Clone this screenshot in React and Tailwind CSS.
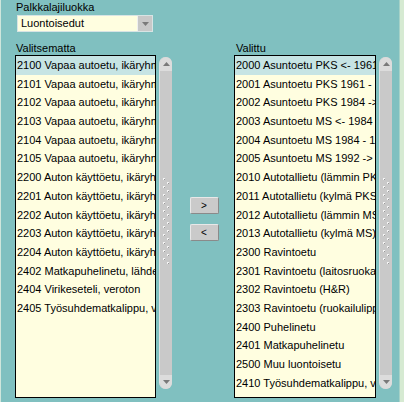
import React from 'react';

const leftItems = [
  '2100 Vapaa autoetu, ikäryhmä A',
  '2101 Vapaa autoetu, ikäryhmä B',
  '2102 Vapaa autoetu, ikäryhmä C',
  '2103 Vapaa autoetu, ikäryhmä A',
  '2104 Vapaa autoetu, ikäryhmä B',
  '2105 Vapaa autoetu, ikäryhmä C',
  '2200 Auton käyttöetu, ikäryhmä A',
  '2201 Auton käyttöetu, ikäryhmä B',
  '2202 Auton käyttöetu, ikäryhmä C',
  '2203 Auton käyttöetu, ikäryhmä A',
  '2204 Auton käyttöetu, ikäryhmä B',
  '2402 Matkapuhelinetu, lähdevero',
  '2404 Virikeseteli, veroton',
  '2405 Työsuhdematkalippu, veroton',
];

const rightItems = [
  '2000 Asuntoetu PKS <- 1961',
  '2001 Asuntoetu PKS 1961 - 1983',
  '2002 Asuntoetu PKS 1984 ->',
  '2003 Asuntoetu MS <- 1984',
  '2004 Asuntoetu MS 1984 - 1991',
  '2005 Asuntoetu MS 1992 ->',
  '2010 Autotallietu (lämmin PKS)',
  '2011 Autotallietu (kylmä PKS)',
  '2012 Autotallietu (lämmin MS)',
  '2013 Autotallietu (kylmä MS)',
  '2300 Ravintoetu',
  '2301 Ravintoetu (laitosruokailu)',
  '2302 Ravintoetu (H&R)',
  '2303 Ravintoetu (ruokailulippu)',
  '2400 Puhelinetu',
  '2401 Matkapuhelinetu',
  '2500 Muu luontoisetu',
  '2410 Työsuhdematkalippu, verollinen',
];

// grip dots in the middle of the scrollbar
const Grip = () => (
  <svg width="9" height="90" viewBox="0 0 9 90">
    {Array.from({ length: 22 }).map((_, i) => (
      <g key={i}>
        <rect x={i % 2 === 0 ? 1 : 5} y={i * 4} width="2" height="2" fill="#f4f4f4" />
        <rect x={i % 2 === 0 ? 2 : 6} y={i * 4 + 1} width="1" height="1" fill="#9a9a9a" />
      </g>
    ))}
  </svg>
);

const ScrollBar = () => (
  <div className="mt-[2px] flex h-[332px] w-[13px] flex-col items-center rounded-t-[7px] rounded-b-[7px] bg-[#c9c9c9] border-l border-[#e2e2e2]">
    <div className="flex h-[14px] w-full items-center justify-center rounded-t-[7px] bg-[#dcdcdc]">
      <svg width="7" height="4" viewBox="0 0 7 4">
        <path d="M0 4 L3.5 0 L7 4 Z" fill="#7a7a7a" />
      </svg>
    </div>
    <div className="flex flex-1 items-center justify-center">
      <Grip />
    </div>
    <div className="flex h-[14px] w-full items-center justify-center rounded-b-[7px] bg-[#dcdcdc]">
      <svg width="7" height="4" viewBox="0 0 7 4">
        <path d="M0 0 L3.5 4 L7 0 Z" fill="#7a7a7a" />
      </svg>
    </div>
  </div>
);

const ListBox = ({ items, width }) => (
  <div className={`h-[343px] ${width} overflow-hidden border border-black bg-[#fffee0]`}>
    {items.map((item, index) => (
      <div
        key={index}
        className={`h-[18.7px] whitespace-nowrap pl-px leading-[18.7px] ${index === 0 ? 'bg-[#c6e4e4]' : ''}`}
      >
        {item}
      </div>
    ))}
  </div>
);

const MoveButton = ({ label }) => (
  <button className="flex h-[17px] w-[29px] items-center justify-center rounded-[2px] border border-t-[#e8e8e8] border-l-[#e8e8e8] border-r-[#8a8a8a] border-b-[#8a8a8a] bg-[#cacaca] text-[10px] leading-none text-black">
    {label}
  </button>
);

export default function App() {
  return (
    <div className="flex h-[402px] w-[404px] overflow-hidden bg-[#80c0c0] font-['Liberation_Sans',Arial,sans-serif] text-[11px] text-black">
      <div className="w-px bg-[#cfe6dc]" />

      <div className="flex-1 pl-[14px] pt-[1px]">
        {/* Luokka valinta */}
        <div className="ml-px h-[13px] leading-[13px]">Palkkalajiluokka</div>
        <div className="ml-[2px] mt-px flex h-[17px] w-[136px] border border-[#d8e4e4] bg-[#fffee0]">
          <div className="flex-1 pl-[3px] leading-[15px]">Luontoisedut</div>
          <div className="flex w-[15px] items-center justify-center border-l border-[#f0f0f0] bg-[#c8c8c8]">
            <svg width="7" height="4" viewBox="0 0 7 4">
              <path d="M0 0 L3.5 4 L7 0 Z" fill="#7a7a7a" />
            </svg>
          </div>
        </div>

        <div className="mt-[9px] flex">
          {/* Valitsematta */}
          <div className="flex flex-col">
            <div className="ml-px h-[14px] leading-[14px]">Valitsematta</div>
            <div className="flex gap-[3px]">
              <ListBox items={leftItems} width="w-[141px]" />
              <ScrollBar />
            </div>
          </div>

          {/* Siirtonapit */}
          <div className="flex w-[62px] flex-col items-center gap-[10px] pl-[2px] pt-[156px]">
            <MoveButton label=">" />
            <MoveButton label="<" />
          </div>

          {/* Valittu */}
          <div className="flex flex-col">
            <div className="ml-[2px] h-[14px] leading-[14px]">Valittu</div>
            <div className="flex gap-[3px]">
              <ListBox items={rightItems} width="w-[142px]" />
              <ScrollBar />
            </div>
          </div>
        </div>
      </div>

      <div className="w-px bg-[#a6d2c8]" />
      <div className="w-[4px] bg-[#d6ead2]" />
    </div>
  );
}
